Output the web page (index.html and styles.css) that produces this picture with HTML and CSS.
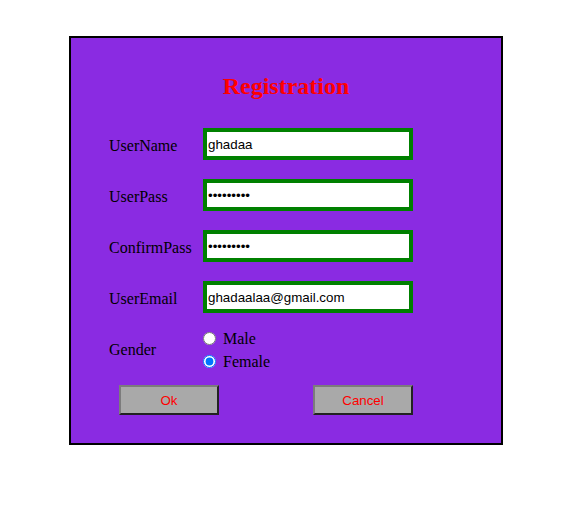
FILE: index.html
```html
<!DOCTYPE html>
<html>
<head>
<meta charset="utf-8">
<title>Registration</title>
<link rel="stylesheet" href="styles.css">
</head>
<body>
<form class="box">
  <h2 class="title">Registration</h2>
  <div class="rows">
    <div class="row">
      <label class="lbl">UserName</label>
      <input class="field" type="text" value="ghadaa">
    </div>
    <div class="row">
      <label class="lbl">UserPass</label>
      <input class="field" type="password" value="ghadaa123">
    </div>
    <div class="row">
      <label class="lbl">ConfirmPass</label>
      <input class="field" type="password" value="ghadaa123">
    </div>
    <div class="row">
      <label class="lbl">UserEmail</label>
      <input class="field" type="text" value="ghadaalaa@gmail.com">
    </div>
    <div class="row gender-row">
      <label class="lbl gender-lbl">Gender</label>
      <div class="options">
        <label class="opt"><input class="radio" type="radio" name="g"><span>Male</span></label>
        <label class="opt"><input class="radio" type="radio" name="g" checked><span>Female</span></label>
      </div>
    </div>
  </div>
  <div class="buttons">
    <button type="button" class="btn">Ok</button>
    <button type="button" class="btn">Cancel</button>
  </div>
</form>
</body>
</html>
```

FILE: styles.css
```css
body {
  margin: 8px;
  background: #ffffff;
  font-family: "Liberation Serif", "Times New Roman", serif;
}

.box {
  box-sizing: border-box;
  width: 434px;
  height: 409px;
  margin: 28px 0 0 61px;
  border: 2px solid #000000;
  background: #8a2be2;
  padding: 35px 88px 0 38px;
  display: flex;
  flex-direction: column;
}

.title {
  margin: 0 -88px 0 -38px;
  text-align: center;
  color: #ff0000;
  font-size: 24px;
  font-weight: bold;
  line-height: 27px;
}

.rows {
  margin-top: 28px;
  display: flex;
  flex-direction: column;
}

.row {
  display: flex;
  align-items: center;
  height: 32px;
  margin-bottom: 19px;
}

.lbl {
  width: 94px;
  font-size: 16px;
  line-height: 18px;
  color: #000000;
  padding-top: 4px;
}

.gender-lbl {
  padding-top: 0;
}

.field {
  box-sizing: border-box;
  width: 210px;
  height: 32px;
  margin: 0;
  border: 4px solid #008000;
  padding: 1px 1px;
  font-family: "Liberation Sans", Arial, sans-serif;
  font-size: 13.333px;
  color: #000000;
  background: #ffffff;
  outline: none;
}

.gender-row {
  height: 41px;
  margin-top: -3px;
  margin-bottom: 15px;
}

.options {
  display: flex;
  flex-direction: column;
  gap: 5px;
}

.opt {
  display: flex;
  align-items: center;
  height: 18px;
  font-size: 16px;
  line-height: 18px;
  color: #000000;
}

.radio {
  width: 13px;
  height: 13px;
  margin: 0 7px 0 0;
}

.opt span {
  padding-top: 2px;
}

.buttons {
  display: flex;
  justify-content: space-between;
  padding-left: 10px;
}

.btn {
  box-sizing: border-box;
  width: 100px;
  height: 30px;
  margin: 0;
  background: #a9a9a9;
  border-style: solid;
  border-width: 2px;
  border-color: #7c7c7c #222222 #222222 #7c7c7c;
  color: #ff0000;
  font-family: "Liberation Sans", Arial, sans-serif;
  font-size: 13.333px;
  padding: 0;
}
```
